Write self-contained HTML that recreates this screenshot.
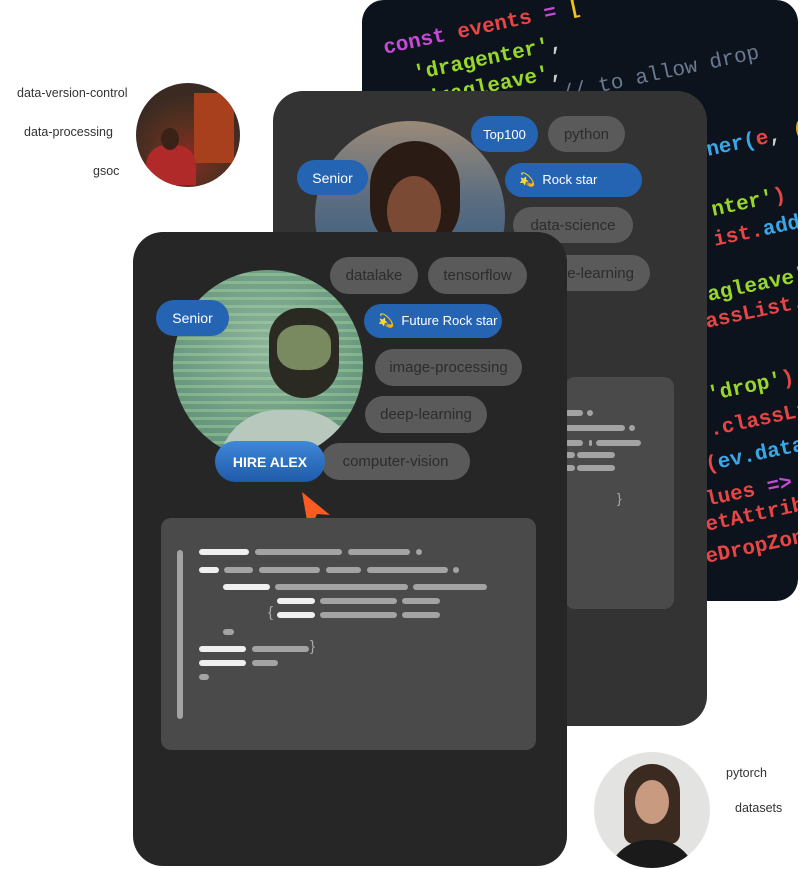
<!DOCTYPE html>
<html><head><meta charset="utf-8"><style>
*{margin:0;padding:0;box-sizing:border-box}
body{width:800px;height:869px;background:#fff;position:relative;overflow:hidden;font-family:"Liberation Sans",sans-serif}
.abs{position:absolute}
.back{left:362px;top:0;width:436px;height:601px;border-radius:22px;background:#0d131c;overflow:hidden}
.c{position:absolute;font-family:"Liberation Mono",monospace;font-size:21px;font-weight:bold;white-space:pre;transform:rotate(-12deg);transform-origin:0 50%;line-height:24px}
.card{border-radius:30px;overflow:hidden}
.pill{position:absolute;border-radius:19px;background:#5a5a5a;color:#2c2c2c;font-size:15px;display:flex;align-items:center;justify-content:center}
.blue{background:#2563b3;color:#fff;font-size:13px}
.bar{position:absolute;height:6px;border-radius:3px;background:#a3a3a3}
.w{background:#efefef}
.lbl{position:absolute;font-size:12.5px;color:#333}
.p{color:#c34bd6}.r{color:#e84545}.g{color:#97d82a}.b{color:#3aa8e8}.y{color:#f2a21b}.k{color:#ccc}
</style></head><body>
<div class="abs back">
 <div class="c" style="left:22px;top:38px"><span class="p">const</span> <span class="r">events</span> <span class="p">=</span> <span style="color:#f2c21b">[</span></div>
 <div class="c" style="left:52px;top:64px"><span class="g">'dragenter'</span><span class="k">,</span></div>
 <div class="c" style="left:52px;top:92px"><span class="g">'dragleave'</span><span class="k">,</span></div>
 <div class="c" style="left:200px;top:84px;font-weight:normal;color:#6a7a90">// to allow drop</div>
 <div class="c" style="left:345px;top:140px"><span class="b">ner(</span><span class="r">e</span><span class="k">,</span> <span class="y">(ev)</span></div>
 <div class="c" style="left:350px;top:200px"><span class="g">nter'</span><span class="r">)</span> <span class="p">{</span></div>
 <div class="c" style="left:352px;top:230px"><span class="r">ist.</span><span class="b">add('so</span></div>
 <div class="c" style="left:346px;top:285px"><span class="g">agleave'</span><span class="r">)</span></div>
 <div class="c" style="left:344px;top:312px"><span class="r">assList.</span><span class="b">rem</span></div>
 <div class="c" style="left:346px;top:385px"><span class="g">'drop'</span><span class="r">)</span> <span class="p">{</span></div>
 <div class="c" style="left:348px;top:420px"><span class="r">.classList</span></div>
 <div class="c" style="left:344px;top:455px"><span class="r">(</span><span class="b">ev.dataTr</span></div>
 <div class="c" style="left:344px;top:490px"><span class="r">lues</span> <span class="p">=&gt;</span> <span class="b">va</span></div>
 <div class="c" style="left:344px;top:515px"><span class="r">etAttribut</span></div>
 <div class="c" style="left:344px;top:547px"><span class="r">eDropZone.</span><span class="b">a</span></div>
</div>

<div class="lbl" style="left:17px;top:86px">data-version-control</div>
<div class="lbl" style="left:24px;top:125px">data-processing</div>
<div class="lbl" style="left:93px;top:164px">gsoc</div>
<div class="abs" style="left:136px;top:83px;width:104px;height:104px;border-radius:50%;background:radial-gradient(circle at 50% 70%,#8a2a22 0,#5a3020 35%,#3a2a22 70%);overflow:hidden">
 <div class="abs" style="left:58px;top:10px;width:40px;height:70px;background:#a8401e"></div>
 <div class="abs" style="left:10px;top:62px;width:50px;height:40px;border-radius:20px 20px 0 0;background:#b02a2a"></div>
 <div class="abs" style="left:25px;top:45px;width:18px;height:22px;border-radius:50%;background:#3a2218"></div>
</div>

<div class="lbl" style="left:726px;top:766px">pytorch</div>
<div class="lbl" style="left:735px;top:801px">datasets</div>
<div class="abs" style="left:594px;top:752px;width:116px;height:116px;border-radius:50%;background:#e3e3e1;overflow:hidden">
 <div class="abs" style="left:30px;top:12px;width:56px;height:80px;border-radius:28px 28px 10px 10px;background:#3a2a20"></div>
 <div class="abs" style="left:41px;top:28px;width:34px;height:44px;border-radius:50%;background:#c89a80"></div>
 <div class="abs" style="left:14px;top:88px;width:88px;height:40px;border-radius:40px 40px 0 0;background:#1a1a1a"></div>
</div>

<!-- middle card -->
<div class="abs card" style="left:273px;top:91px;width:434px;height:635px;background:#333">
 <div class="abs" style="left:42px;top:30px;width:190px;height:190px;border-radius:50%;background:linear-gradient(180deg,#9a8a78 0,#5d6e80 40%,#3f5f80 70%);overflow:hidden">
  <div class="abs" style="left:55px;top:20px;width:90px;height:110px;border-radius:45px;background:#2a1c14"></div>
  <div class="abs" style="left:72px;top:55px;width:54px;height:70px;border-radius:50%;background:#7a4a34"></div>
 </div>
 <div class="pill blue" style="left:24px;top:69px;width:71px;height:35px;font-size:14px">Senior</div>
 <div class="pill blue" style="left:198px;top:25px;width:67px;height:36px">Top100</div>
 <div class="pill" style="left:275px;top:25px;width:77px;height:36px">python</div>
 <div class="pill blue" style="left:232px;top:72px;width:137px;height:34px;justify-content:flex-start;padding-left:14px">💫&nbsp; Rock star</div>
 <div class="pill" style="left:240px;top:116px;width:120px;height:36px">data-science</div>
 <div class="pill" style="left:240px;top:164px;width:137px;height:36px;justify-content:flex-end;padding-right:16px">machine-learning</div>
 <div class="abs" style="left:292px;top:286px;width:109px;height:232px;border-radius:10px;background:#4a4a4a">
  <div class="bar" style="left:0;top:33px;width:18px"></div><div class="bar" style="left:22px;top:33px;width:6px"></div>
  <div class="bar" style="left:0;top:48px;width:60px"></div><div class="bar" style="left:64px;top:48px;width:6px"></div>
  <div class="bar" style="left:0;top:63px;width:18px"></div><div class="bar" style="left:24px;top:63px;width:3px"></div><div class="bar" style="left:31px;top:63px;width:45px"></div>
  <div class="bar" style="left:0;top:75px;width:10px"></div><div class="bar" style="left:12px;top:75px;width:38px"></div>
  <div class="bar" style="left:0;top:88px;width:10px"></div><div class="bar" style="left:12px;top:88px;width:38px"></div>
  <div class="abs" style="left:52px;top:113px;color:#aaa;font-size:14px">}</div>
 </div>
</div>

<!-- front card -->
<div class="abs card" style="left:133px;top:232px;width:434px;height:634px;background:#262626">
 <div class="abs" style="left:40px;top:38px;width:190px;height:190px;border-radius:50%;background:radial-gradient(circle at 50% 40%,#8fb39a 0,#6c9a80 60%,#5e8a72 100%);overflow:hidden">
  <div class="abs" style="left:0;top:0;width:190px;height:190px;background:repeating-linear-gradient(0deg,rgba(170,230,170,.35) 0 3px,transparent 3px 8px)"></div>
  <div class="abs" style="left:96px;top:38px;width:70px;height:90px;border-radius:35px 35px 40px 40px;background:#2a2a22"></div>
  <div class="abs" style="left:104px;top:55px;width:54px;height:45px;border-radius:40%;background:#7a8a60"></div>
  <div class="abs" style="left:45px;top:140px;width:140px;height:70px;border-radius:60px 60px 0 0;background:#b8c8bc"></div>
 </div>
 <div class="pill blue" style="left:23px;top:68px;width:73px;height:36px;font-size:14px">Senior</div>
 <div class="pill" style="left:197px;top:25px;width:88px;height:37px">datalake</div>
 <div class="pill" style="left:295px;top:25px;width:99px;height:37px">tensorflow</div>
 <div class="pill blue" style="left:231px;top:72px;width:138px;height:34px;justify-content:flex-start;padding-left:14px">💫&nbsp; Future Rock star</div>
 <div class="pill" style="left:242px;top:117px;width:147px;height:37px">image-processing</div>
 <div class="pill" style="left:232px;top:164px;width:122px;height:37px">deep-learning</div>
 <div class="pill" style="left:188px;top:211px;width:149px;height:37px">computer-vision</div>
 <div class="pill" style="left:82px;top:209px;width:110px;height:41px;border-radius:21px;background:linear-gradient(180deg,#3f88d8,#1f5aaa);color:#fff;font-weight:bold;font-size:14px">HIRE ALEX</div>
 <svg class="abs" style="left:160px;top:255px" width="40" height="45"><polygon points="9,5 37,28 24,27 16,45" fill="#fb5a22"/></svg>
 <div class="abs" style="left:28px;top:286px;width:375px;height:232px;border-radius:10px;background:#4a4a4a">
  <div class="bar" style="left:16px;top:32px;width:6px;height:169px"></div>
  <div class="bar w" style="left:38px;top:31px;width:50px"></div><div class="bar" style="left:94px;top:31px;width:87px"></div><div class="bar" style="left:187px;top:31px;width:62px"></div><div class="bar" style="left:255px;top:31px;width:6px"></div>
  <div class="bar w" style="left:38px;top:49px;width:20px"></div><div class="bar" style="left:63px;top:49px;width:29px"></div><div class="bar" style="left:98px;top:49px;width:61px"></div><div class="bar" style="left:165px;top:49px;width:35px"></div><div class="bar" style="left:206px;top:49px;width:81px"></div><div class="bar" style="left:292px;top:49px;width:6px"></div>
  <div class="bar w" style="left:62px;top:66px;width:47px"></div><div class="bar" style="left:114px;top:66px;width:133px"></div><div class="bar" style="left:252px;top:66px;width:74px"></div>
  <div class="bar w" style="left:116px;top:80px;width:38px"></div><div class="bar" style="left:159px;top:80px;width:77px"></div><div class="bar" style="left:241px;top:80px;width:38px"></div>
  <div class="abs" style="left:107px;top:86px;color:#aaa;font-size:15px">{</div>
  <div class="bar w" style="left:116px;top:94px;width:38px"></div><div class="bar" style="left:159px;top:94px;width:77px"></div><div class="bar" style="left:241px;top:94px;width:38px"></div>
  <div class="bar" style="left:62px;top:111px;width:11px"></div>
  <div class="bar w" style="left:38px;top:128px;width:47px"></div><div class="bar" style="left:91px;top:128px;width:57px"></div>
  <div class="abs" style="left:149px;top:120px;color:#aaa;font-size:15px">}</div>
  <div class="bar w" style="left:38px;top:142px;width:47px"></div><div class="bar" style="left:91px;top:142px;width:26px"></div>
  <div class="bar" style="left:38px;top:156px;width:10px"></div>
 </div>
</div>
</body></html>
